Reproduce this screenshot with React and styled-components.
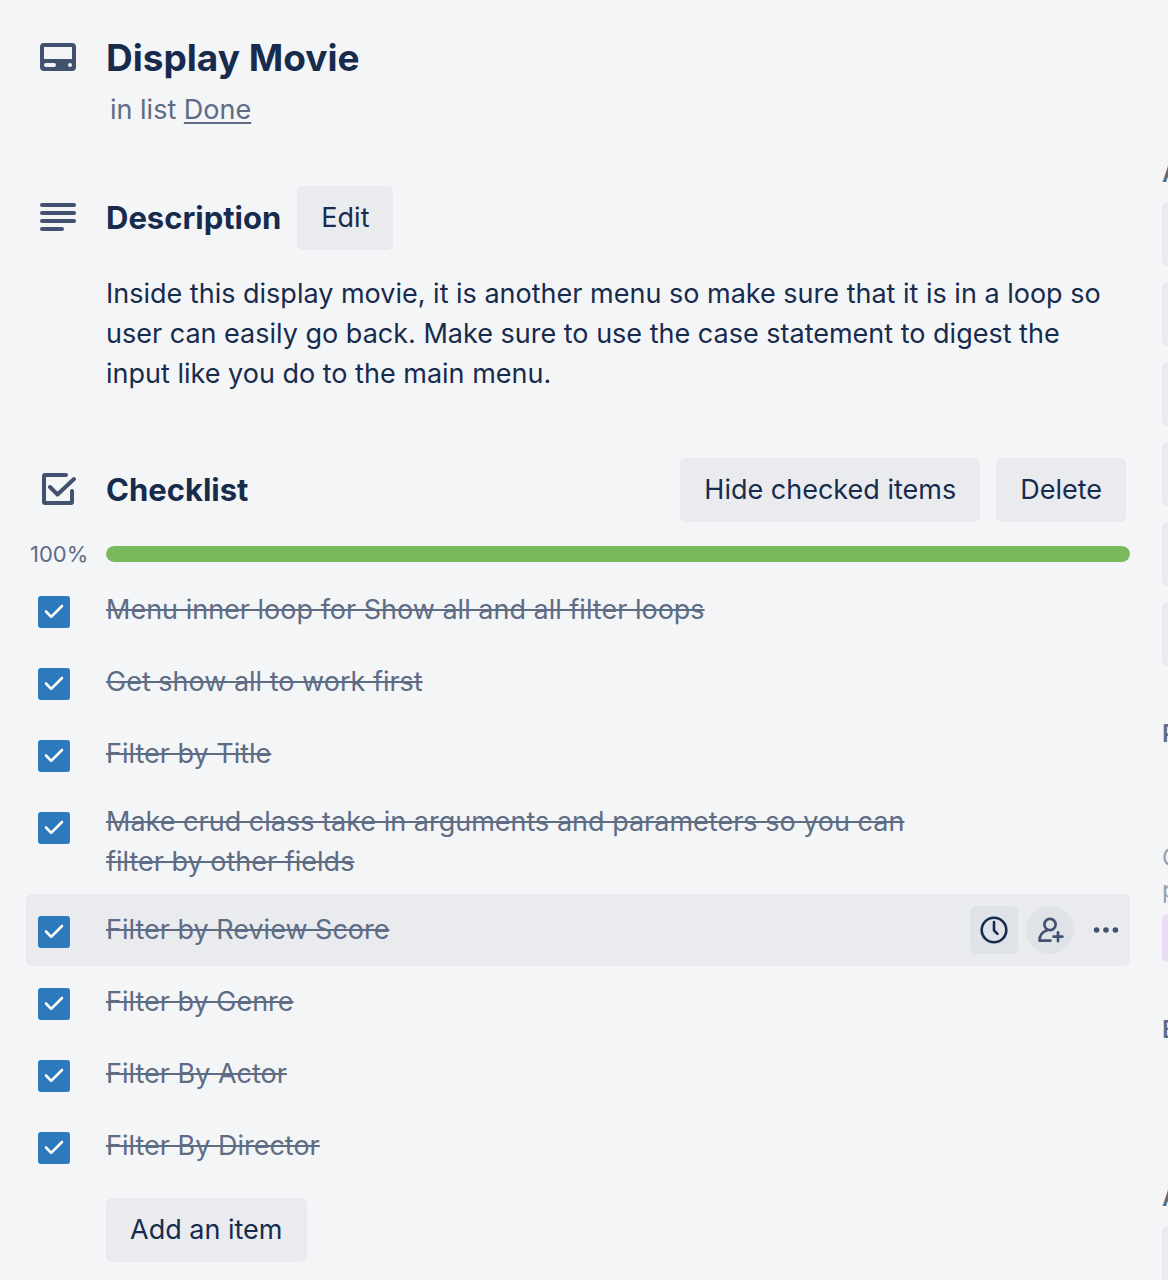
import React, { useState } from "react";
import styled, { createGlobalStyle } from "styled-components";

const GlobalStyle = createGlobalStyle`
  *, *::before, *::after { box-sizing: border-box; }
  body {
    margin: 0;
    background: #f4f5f7;
    color: #172b4d;
    font-family: Inter, "Noto Sans", sans-serif;
    font-size: 27px;
    line-height: 40px;
  }
  button, input { font: inherit; color: inherit; margin: 0; }
`;

const Page = styled.div`
  display: grid;
  grid-template-columns: minmax(0, 1fr) 6px;
  column-gap: 32px;
  min-height: 100vh;
  padding-left: 26px;
  background: #f4f5f7;
`;

const Main = styled.main`
  padding: 34px 0 18px;
`;

const SectionHeader = styled.header`
  display: flex;
  align-items: center;
  min-height: ${(p) => p.$height || 64}px;
  padding-right: 4px;
`;

const IconCell = styled.span`
  display: flex;
  flex: 0 0 80px;
  padding: 0 0 2px 14px;
  color: #42526e;
`;

const Title = styled.h1`
  margin: 0;
  font-size: 37px;
  line-height: 48px;
  font-weight: 700;
`;

const Heading = styled.h2`
  flex: ${(p) => (p.$grow ? "1" : "0 0 auto")};
  margin: 0 16px 0 0;
  font-size: 31px;
  line-height: 40px;
  font-weight: 700;
`;

const Location = styled.p`
  margin: 8px 0 56px 84px;
  color: #5e6c84;
`;

const ListLink = styled.a`
  color: inherit;
  text-decoration: underline;
  text-decoration-thickness: 2px;
  text-underline-offset: 3px;
`;

const Button = styled.button`
  height: 64px;
  padding: 0 24px;
  border: 0;
  border-radius: 6px;
  background: #eaebef;
  white-space: nowrap;
  cursor: pointer;
`;

const ButtonGroup = styled.div`
  display: flex;
  gap: 16px;
`;

const Description = styled.p`
  margin: 24px 0 64px 80px;
`;

const ProgressRow = styled.div`
  display: flex;
  align-items: center;
  height: 16px;
  margin: 24px 0 12px;
`;

const ProgressLabel = styled.span`
  flex: 0 0 80px;
  padding-left: 4px;
  color: #5e6c84;
  font-size: 22px;
`;

const Track = styled.div`
  flex: 1;
  height: 16px;
  border-radius: 8px;
  background: #dfe1e6;
  overflow: hidden;
`;

const Fill = styled.div`
  height: 100%;
  border-radius: 8px;
  background: #7aba5d;
`;

const Items = styled.ul`
  margin: 0 0 16px;
  padding: 0;
  list-style: none;
`;

const Item = styled.li`
  display: flex;
  align-items: center;
  min-height: 72px;
  padding: 12px 0;
  border-radius: 6px;
  background: ${(p) => (p.$active ? "#eaebef" : "transparent")};
`;

const CheckCell = styled.span`
  display: grid;
  flex: 0 0 80px;
  align-self: flex-start;
  padding: 10px 0 0 12px;
`;

const Checkbox = styled.input`
  grid-area: 1 / 1;
  width: 32px;
  height: 32px;
  appearance: none;
  border-radius: 3px;
  background: #dfe1e6;
  cursor: pointer;
  &:checked { background: #2e79bb; }
`;

const Tick = styled.svg`
  grid-area: 1 / 1;
  pointer-events: none;
`;

const ItemLabel = styled.label`
  flex: 1;
  padding-right: 8px;
  color: #5e6c84;
  text-decoration: ${(p) => (p.$done ? "line-through" : "none")};
  text-decoration-thickness: 2px;
`;

const Actions = styled.div`
  display: flex;
  flex: 0 0 160px;
  gap: 8px;
`;

const IconButton = styled.button`
  display: grid;
  place-items: center;
  width: 48px;
  height: 48px;
  padding: 0;
  border: 0;
  border-radius: ${(p) => (p.$round ? "50%" : "6px")};
  background: ${(p) => (p.$plain ? "transparent" : "#dfe3e8")};
  color: ${(p) => (p.$strong ? "#172b4d" : "#42526e")};
  cursor: pointer;
`;

const AddRow = styled.div`
  padding-left: 80px;
`;

const Sidebar = styled.aside`
  contain: size;
  overflow: hidden;
`;

const SideGroup = styled.section`
  width: 336px;
  padding-top: ${(p) => p.$top}px;
`;

const SideHeading = styled.h3`
  margin: 0 0 12px;
  color: #5e6c84;
  font-size: 24px;
  line-height: 32px;
  font-weight: 600;
`;

const SideStack = styled.div`
  display: grid;
  gap: 16px;
`;

const SideNote = styled.p`
  margin: 92px 0 8px;
  color: #97a0af;
  font-size: 24px;
  line-height: 32px;
`;

const UpgradeButton = styled(Button)`
  display: block;
  width: 100%;
  height: 48px;
  background: #eadcf4;
`;

const CardIcon = () => (
  <svg width="36" height="28" viewBox="0 0 36 28" aria-hidden="true">
    <path
      fill="currentColor"
      fillRule="evenodd"
      d="M4 0h28a4 4 0 0 1 4 4v20a4 4 0 0 1-4 4H4a4 4 0 0 1-4-4V4a4 4 0 0 1 4-4zM4 4v12h28V4zM6 20a2 2 0 0 0 0 4h8a2 2 0 0 0 0-4zM30 20a2 2 0 1 0 0 4a2 2 0 0 0 0-4z"
    />
  </svg>
);

const LinesIcon = () => (
  <svg width="36" height="28" viewBox="0 0 36 28" fill="none" stroke="currentColor" strokeWidth="4" strokeLinecap="round" aria-hidden="true">
    <path d="M2 2h32M2 10h32M2 18h32M2 26h20" />
  </svg>
);

const ChecklistIcon = () => (
  <svg width="36" height="32" viewBox="0 0 36 32" fill="none" stroke="currentColor" strokeWidth="4" strokeLinecap="round" strokeLinejoin="round" aria-hidden="true">
    <path d="M26 2H5a1 1 0 0 0-1 1v26a1 1 0 0 0 1 1h26a1 1 0 0 0 1-1V18" />
    <path d="M10 14l7.5 7.5L34 6" />
  </svg>
);

const ClockIcon = () => (
  <svg width="32" height="32" viewBox="0 0 32 32" fill="none" stroke="currentColor" strokeWidth="2.6" strokeLinecap="round" strokeLinejoin="round" aria-hidden="true">
    <circle cx="16" cy="16" r="12.3" />
    <path d="M16 8v8.3l3.5 3.5" />
  </svg>
);

const AddMemberIcon = () => (
  <svg width="32" height="32" viewBox="0 0 32 32" fill="none" stroke="currentColor" strokeWidth="2.7" strokeLinecap="round" strokeLinejoin="round" aria-hidden="true">
    <circle cx="16" cy="10.5" r="5.6" />
    <path d="M13.2 16.2C8.5 17.6 5.6 21 5.5 26.6H16.5" />
    <path d="M24 18.3v8.9M19.6 22.7h8.8" />
  </svg>
);

const DotsIcon = () => (
  <svg width="32" height="32" viewBox="0 0 32 32" fill="currentColor" aria-hidden="true">
    <circle cx="6.6" cy="16" r="2.8" />
    <circle cx="16" cy="16" r="2.8" />
    <circle cx="25.4" cy="16" r="2.8" />
  </svg>
);

const INITIAL_ITEMS = [
  "Menu inner loop for Show all and all filter loops",
  "Get show all to work first",
  "Filter by Title",
  "Make crud class take in arguments and parameters so you can filter by other fields",
  "Filter by Review Score",
  "Filter by Genre",
  "Filter By Actor",
  "Filter By Director",
].map((text, id) => ({ id, text, done: true }));

const CARD_FEATURES = ["Members", "Labels", "Checklist", "Due date", "Attachment", "Cover"];

export default function App() {
  const [items, setItems] = useState(INITIAL_ITEMS);
  const percent = Math.round((items.filter((i) => i.done).length / items.length) * 100);
  const toggle = (id) =>
    setItems((list) => list.map((i) => (i.id === id ? { ...i, done: !i.done } : i)));

  return (
    <Page>
      <GlobalStyle />
      <Main>
        <SectionHeader $height={48}>
          <IconCell><CardIcon /></IconCell>
          <Title>Display Movie</Title>
        </SectionHeader>
        <Location>in list <ListLink href="#done">Done</ListLink></Location>

        <SectionHeader>
          <IconCell><LinesIcon /></IconCell>
          <Heading>Description</Heading>
          <Button type="button">Edit</Button>
        </SectionHeader>
        <Description>
          Inside this display movie, it is another menu so make sure that it is in a loop so
          user can easily go back. Make sure to use the case statement to digest the input
          like you do to the main menu.
        </Description>

        <SectionHeader>
          <IconCell><ChecklistIcon /></IconCell>
          <Heading $grow>Checklist</Heading>
          <ButtonGroup>
            <Button type="button">Hide checked items</Button>
            <Button type="button">Delete</Button>
          </ButtonGroup>
        </SectionHeader>
        <ProgressRow>
          <ProgressLabel>{percent}%</ProgressLabel>
          <Track role="progressbar" aria-label="Checklist progress" aria-valuenow={percent} aria-valuemin={0} aria-valuemax={100}>
            <Fill style={{ width: `${percent}%` }} />
          </Track>
        </ProgressRow>

        <Items>
          {items.map((item) => {
            const active = item.id === 4;
            return (
              <Item key={item.id} $active={active}>
                <CheckCell>
                  <Checkbox
                    type="checkbox"
                    id={`item-${item.id}`}
                    checked={item.done}
                    onChange={() => toggle(item.id)}
                  />
                  <Tick width="32" height="32" viewBox="0 0 32 32" fill="none" stroke="#fff" strokeWidth="2.6" strokeLinecap="round" strokeLinejoin="round" aria-hidden="true">
                    {item.done && <path d="M8 15.5l5.2 5.3L24 10" />}
                  </Tick>
                </CheckCell>
                <ItemLabel htmlFor={`item-${item.id}`} $done={item.done}>{item.text}</ItemLabel>
                <Actions>
                  {active && (
                    <>
                      <IconButton type="button" $strong aria-label="Set due date"><ClockIcon /></IconButton>
                      <IconButton type="button" $round aria-label="Assign member"><AddMemberIcon /></IconButton>
                      <IconButton type="button" $plain aria-label="More actions"><DotsIcon /></IconButton>
                    </>
                  )}
                </Actions>
              </Item>
            );
          })}
        </Items>
        <AddRow>
          <Button type="button">Add an item</Button>
        </AddRow>
      </Main>

      <Sidebar>
        <SideGroup $top={158}>
          <SideHeading>Add to card</SideHeading>
          <SideStack>
            {CARD_FEATURES.map((name) => (
              <Button key={name} type="button" aria-label={name} />
            ))}
          </SideStack>
        </SideGroup>
        <SideGroup $top={52}>
          <SideHeading>Power-Ups</SideHeading>
          <SideNote>Get unlimited<br />plus much more</SideNote>
          <UpgradeButton type="button" aria-label="Upgrade" />
        </SideGroup>
        <SideGroup $top={52}>
          <SideHeading>Butler</SideHeading>
        </SideGroup>
        <SideGroup $top={124}>
          <SideHeading>Actions</SideHeading>
          <SideStack>
            <Button type="button" aria-label="Move" />
          </SideStack>
        </SideGroup>
      </Sidebar>
    </Page>
  );
}
